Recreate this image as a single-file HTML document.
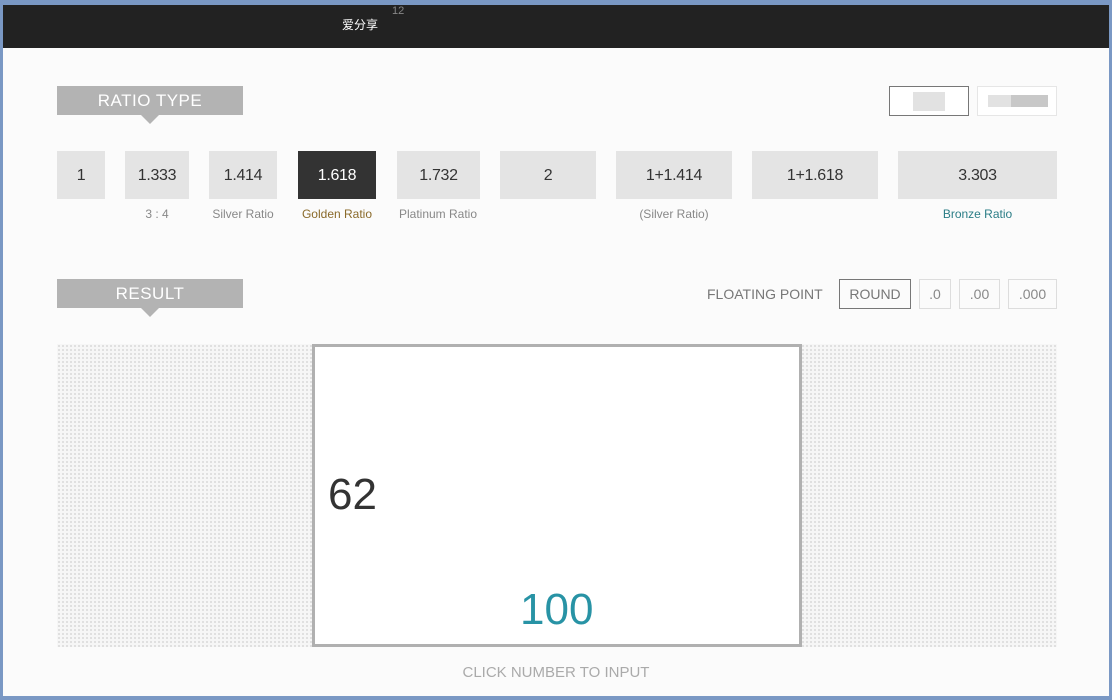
<!DOCTYPE html>
<html><head><meta charset="utf-8"><style>
*{margin:0;padding:0;box-sizing:border-box}
body{width:1112px;height:700px;background:#7a98c4;position:relative;overflow:hidden;font-family:"Liberation Sans","Noto Sans CJK SC",sans-serif}
.page{position:absolute;left:3px;top:5px;width:1106px;height:691px;background:#fbfbfb}
.top{position:absolute;left:3px;top:5px;width:1106px;height:43px;background:#222}
.a{position:absolute}
.lbl{position:absolute;background:#b3b3b3;color:#fff;font-size:17px;letter-spacing:0.5px;text-align:center;line-height:29px;width:186px;height:29px}
.lbl:after{content:"";position:absolute;left:84px;top:29px;border-left:9px solid transparent;border-right:9px solid transparent;border-top:9px solid #b3b3b3}
.btn{position:absolute;top:151px;height:48px;background:#e4e4e4;color:#333;font-size:16px;line-height:49px;text-align:center;letter-spacing:-0.3px}
.sub{position:absolute;top:207px;font-size:12px;color:#888;text-align:center}
.fp{position:absolute;top:279px;height:30px;border:1px solid #ddd;color:#888;font-size:14px;line-height:29px;text-align:center}
</style></head><body>
<div class="page"></div>
<div class="top"></div>
<div class="a" style="left:342px;top:16px;color:#fff;font-size:12px">爱分享</div>
<div class="a" style="left:392px;top:5px;color:#888;font-size:11px">12</div>

<div class="lbl" style="left:57px;top:86px">RATIO TYPE</div>
<div class="a" style="left:889px;top:86px;width:80px;height:30px;border:1px solid #777;background:#fff"><div class="a" style="left:23px;top:5px;width:32px;height:19px;background:#e2e2e2"></div></div>
<div class="a" style="left:977px;top:86px;width:80px;height:30px;border:1px solid #e6e6e6;background:#fff"><div class="a" style="left:10px;top:8px;width:23px;height:12px;background:#e2e2e2"></div><div class="a" style="left:33px;top:8px;width:37px;height:12px;background:#c8c8c8"></div></div>

<div class="btn" style="left:57px;width:48px">1</div>
<div class="btn" style="left:125px;width:64px">1.333</div>
<div class="btn" style="left:209px;width:68px">1.414</div>
<div class="btn" style="left:298px;width:78px;background:#333;color:#fff">1.618</div>
<div class="btn" style="left:397px;width:83px">1.732</div>
<div class="btn" style="left:500px;width:96px">2</div>
<div class="btn" style="left:616px;width:116px">1+1.414</div>
<div class="btn" style="left:752px;width:126px">1+1.618</div>
<div class="btn" style="left:898px;width:159px">3.303</div>

<div class="sub" style="left:125px;width:64px">3 : 4</div>
<div class="sub" style="left:199px;width:88px">Silver Ratio</div>
<div class="sub" style="left:287px;width:100px;color:#8a6a2a">Golden Ratio</div>
<div class="sub" style="left:383px;width:110px">Platinum Ratio</div>
<div class="sub" style="left:616px;width:116px">(Silver Ratio)</div>
<div class="sub" style="left:898px;width:159px;color:#2b7d86">Bronze Ratio</div>

<div class="lbl" style="left:57px;top:279px">RESULT</div>
<div class="a" style="left:707px;top:286px;color:#777;font-size:14px">FLOATING POINT</div>
<div class="fp" style="left:839px;width:72px;border-color:#777;color:#777">ROUND</div>
<div class="fp" style="left:919px;width:32px">.0</div>
<div class="fp" style="left:959px;width:41px">.00</div>
<div class="fp" style="left:1008px;width:49px">.000</div>

<div class="a" style="left:57px;top:344px;width:1000px;height:303px;background-color:#f6f6f6;background-image:radial-gradient(#d8d8d8 0.8px,transparent 1px);background-size:4px 4px"></div>
<div class="a" style="left:312px;top:344px;width:490px;height:303px;border:3px solid #b0b0b0;background:#fff"></div>
<div class="a" style="left:328px;top:470px;font-size:44px;color:#333">62</div>
<div class="a" style="left:520px;top:585px;font-size:44px;color:#2893a5">100</div>
<div class="a" style="left:0;width:1112px;top:664px;text-align:center;color:#aaa;font-size:15px">CLICK NUMBER TO INPUT</div>
</body></html>
